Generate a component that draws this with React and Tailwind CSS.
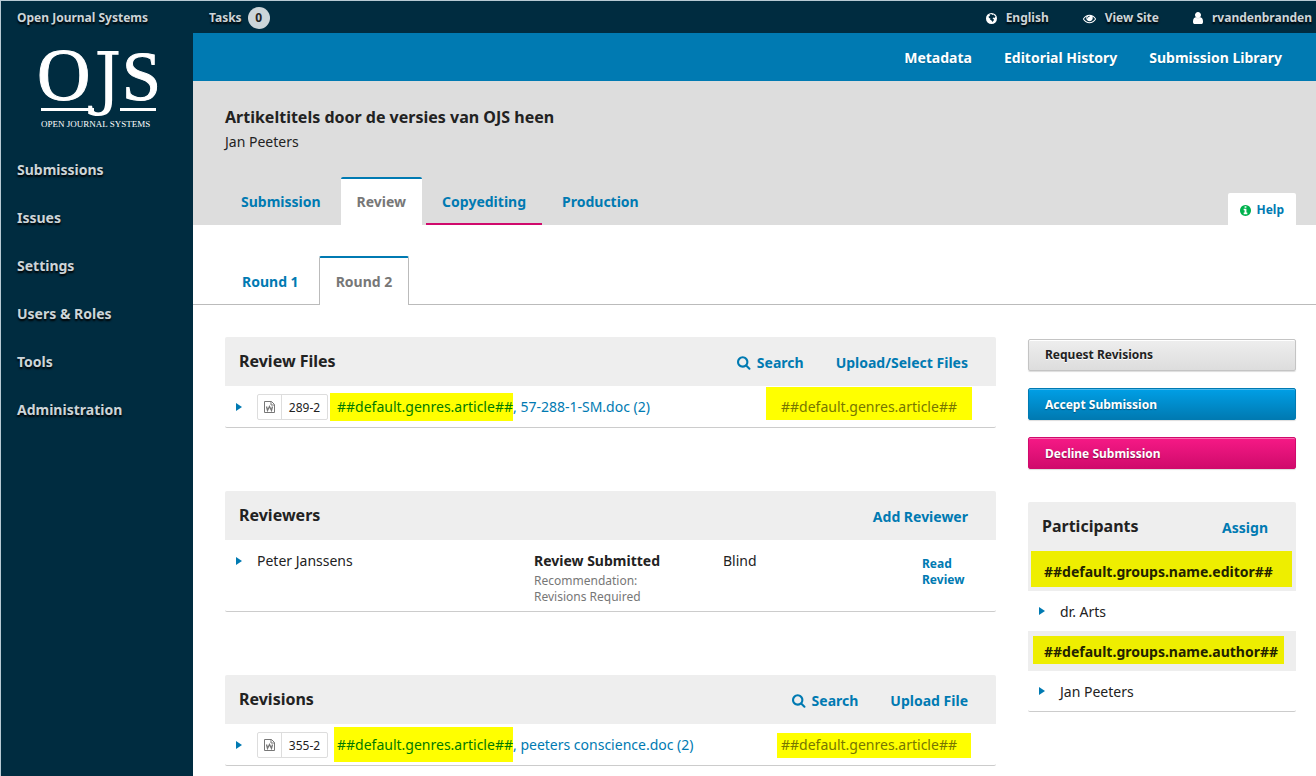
import React from "react";

const SIDE_MENU = ["Submissions", "Issues", "Settings", "Users & Roles", "Tools", "Administration"];

const WORKFLOW_TABS = [
  { label: "Submission", className: "border-transparent text-[#007ab2]" },
  { label: "Review", className: "rounded-t-xs border-t-[#007ab2] border-b-white bg-white text-[#777]" },
  { label: "Copyediting", className: "border-t-transparent border-b-[#d00a6c] text-[#007ab2]" },
  { label: "Production", className: "border-transparent text-[#007ab2]" },
];

const GlobeIcon = () => (
  <svg className="h-[11px] w-[11px]" viewBox="0 0 22 22" aria-hidden="true">
    <circle cx="11" cy="11" r="11" fill="#fff" />
    <path
      fill="#002c40"
      d="M7 3l4-1 1 2 3-1 4 4-2 3-2-1-2 2 2 1 1 2-3 4-2-3-3-2 1-2-3-1-1-3 3-1z"
    />
  </svg>
);

const EyeIcon = () => (
  <svg className="h-[13px] w-[13px]" viewBox="0 0 1792 1792" fill="#fff" aria-hidden="true">
    <path d="M1664 960q-152-236-381-353 61 104 61 225 0 185-131.5 316.5t-316.5 131.5-316.5-131.5-131.5-316.5q0-121 61-225-229 117-381 353 133 205 333.5 326.5t434.5 121.5 434.5-121.5 333.5-326.5zm-720-384q0-20-14-34t-34-14q-125 0-214.5 89.5t-89.5 214.5q0 20 14 34t34 14 34-14 14-34q0-86 61-147t147-61q20 0 34-14t14-34zm848 384q0 34-20 69-140 230-376.5 368.5t-499.5 138.5-499.5-139-376.5-368q-20-35-20-69t20-69q140-229 376.5-368t499.5-139 499.5 139 376.5 368q20 35 20 69z" />
  </svg>
);

const UserIcon = () => (
  <svg className="h-3 w-[10px]" viewBox="256 128 1280 1536" fill="#fff" aria-hidden="true">
    <path d="M1536 1399q0 109-62.5 187t-150.5 78h-854q-88 0-150.5-78t-62.5-187q0-85 8.5-160.5t31.5-152 58.5-131 94-89 134.5-34.5q131 128 313 128t313-128q76 0 134.5 34.5t94 89 58.5 131 31.5 152 8.5 160.5zm-256-887q0 159-112.5 271.5t-271.5 112.5-271.5-112.5-112.5-271.5 112.5-271.5 271.5-112.5 271.5 112.5 112.5 271.5z" />
    <path d="M560 800h672v200H560z" />
  </svg>
);

const SearchIcon = () => (
  <svg className="h-[14px] w-[14px]" viewBox="64 128 1728 1664" fill="currentColor" aria-hidden="true">
    <path d="M1216 832q0-185-131.5-316.5t-316.5-131.5-316.5 131.5-131.5 316.5 131.5 316.5 316.5 131.5 316.5-131.5 131.5-316.5zm512 832q0 52-38 90t-90 38q-54 0-90-38l-343-342q-179 124-399 124-143 0-273.5-55.5t-225-150-150-225-55.5-273.5 55.5-273.5 150-225 225-150 273.5-55.5 273.5 55.5 225 150 150 225 55.5 273.5q0 220-124 399l343 343q37 37 37 90z" />
  </svg>
);

const InfoIcon = () => (
  <svg className="h-[11px] w-[11px]" viewBox="128 128 1536 1536" fill="#00b24e" aria-hidden="true">
    <path d="M1152 1376v-160q0-14-9-23t-23-9h-96v-512q0-14-9-23t-23-9h-320q-14 0-23 9t-9 23v160q0 14 9 23t23 9h96v320h-96q-14 0-23 9t-9 23v160q0 14 9 23t23 9h448q14 0 23-9t9-23zm-128-896v-160q0-14-9-23t-23-9h-192q-14 0-23 9t-9 23v160q0 14 9 23t23 9h192q14 0 23-9t9-23zm640 416q0 209-103 385.5t-279.5 279.5-385.5 103-385.5-103-279.5-279.5-103-385.5 103-385.5 279.5-279.5 385.5-103 385.5 103 279.5 279.5 103 385.5z" />
  </svg>
);

const WordIcon = () => (
  <svg className="h-3 w-[11px]" viewBox="0 0 11 12" fill="none" stroke="#777" aria-hidden="true">
    <path d="M.5.5h7l3 3v8H.5z" />
    <path d="M7 .5v3.5h3.5" />
    <path d="M2.5 5.5l1 4 2-4 2 4 1-4" strokeWidth="1.3" />
  </svg>
);

const Caret = () => (
  <svg className="h-2 w-[6px]" viewBox="0 0 6 8" fill="#007ab2" aria-hidden="true">
    <path d="M0 0l6 4-6 4z" />
  </svg>
);

const Logo = () => (
  <a href="#" aria-label="Open Journal Systems" className="mx-9 mt-4 block h-[82px]">
    <svg className="h-[82px] w-[124px] overflow-visible" viewBox="0 0 124 82" fill="#fff">
      <g stroke="#fff" strokeWidth="1">
        <text x="0" y="51" fontSize="74" fontFamily="Liberation Serif, serif">O</text>
        <text x="57" y="53" fontSize="69" strokeWidth="0" fontFamily="DejaVu Serif, serif">J</text>
        <text x="85" y="51" fontSize="70" fontFamily="Liberation Serif, serif">S</text>
      </g>
      <rect x="4" y="59" width="53" height="3" />
      <rect x="83" y="59" width="36" height="3" />
      <text x="4" y="78" fontSize="9" fontFamily="Liberation Serif, serif">OPEN JOURNAL SYSTEMS</text>
    </svg>
  </a>
);

const Panel = ({ title, search, action, children }) => (
  <section className="rounded-xs border-b border-[#ccc]">
    <div className="flex h-[49px] items-center justify-between rounded-t-xs bg-[#eee] pr-7 pb-[2px] pl-[14px]">
      <h4 className="text-base font-bold">{title}</h4>
      <div className="flex gap-8 pt-1 text-sm font-bold text-[#007ab2]">
        {search && (
          <button type="button" className="flex items-center gap-[6px]">
            <SearchIcon />
            Search
          </button>
        )}
        <a href="#">{action}</a>
      </div>
    </div>
    {children}
  </section>
);

const FileTable = ({ id, file, nameMark, genreMark }) => (
  <table className="w-full text-sm">
    <tbody>
      <tr className="h-[41px]">
        <td className="p-0">
          <div className="flex items-center pl-[11px]">
            <button type="button" aria-label="Show details" className="mr-[15px]">
              <Caret />
            </button>
            <span className="flex h-[26px] items-center rounded-xs border border-[#ddd] text-xs">
              <span className="flex h-full w-6 items-center justify-center border-r border-[#ddd]">
                <WordIcon />
              </span>
              <span className="w-[45px] pt-[2px] text-center">{id}</span>
            </span>
            <a href="#" className="flex items-center text-[#007ab2]">
              <span className={nameMark}>##default.genres.article##</span>, {file}
            </a>
          </div>
        </td>
        <td className="w-[230px] p-0 align-top">
          <span className={genreMark}>##default.genres.article##</span>
        </td>
      </tr>
    </tbody>
  </table>
);

const ParticipantRow = ({ name }) => (
  <div className="flex h-10 items-center gap-[15px] pl-[11px] text-sm">
    <button type="button" aria-label={name}>
      <Caret />
    </button>
    <span className="pt-[2px]">{name}</span>
  </div>
);

const App = () => {
  return (
    <div className="flex min-h-screen flex-col border-t border-l border-[#b8cad4] bg-white font-['Noto_Sans',sans-serif] text-[#222]">
      <header className="flex h-8 items-center bg-[#002c40] pt-[2px] text-xs font-bold text-[#ccd5d9] [text-shadow:0_2px_2px_#000]">
        <a href="#" className="w-48 pl-4">Open Journal Systems</a>
        <a href="#" className="flex items-center gap-[6px] pl-4">
          Tasks
          <span className="flex h-[22px] w-[22px] items-center justify-center rounded-full bg-[#ccd5d9] text-[#222] [text-shadow:none]">
            0
          </span>
        </a>
        <nav className="ml-auto flex gap-[34px] pr-1">
          <a href="#" className="flex items-center gap-[9px]">
            <GlobeIcon />
            English
          </a>
          <a href="#" className="flex items-center gap-[9px]">
            <EyeIcon />
            View Site
          </a>
          <a href="#" className="flex items-center gap-[9px]">
            <UserIcon />
            rvandenbranden
          </a>
        </nav>
      </header>

      <div className="flex flex-1">
        <aside className="w-48 shrink-0 bg-[#002c40]">
          <Logo />
          <ul className="mt-[15px] text-sm font-bold text-[#ccd5d9] [text-shadow:0_2px_2px_#000]">
            {SIDE_MENU.map((item) => (
              <li key={item}>
                <a href="#" className="flex h-12 items-center pl-4">{item}</a>
              </li>
            ))}
          </ul>
        </aside>

        <main className="min-w-0 flex-1">
          <nav className="flex h-12 items-center justify-end gap-8 bg-[#007ab2] pt-[2px] pr-[34px] text-sm font-bold text-white [text-shadow:0_1px_1px_#006694]">
            <a href="#">Metadata</a>
            <a href="#">Editorial History</a>
            <a href="#">Submission Library</a>
          </nav>

          <div className="h-36 bg-[#ddd] pt-6 pr-5 pl-8">
            <h1 className="text-base font-bold">Artikeltitels door de versies van OJS heen</h1>
            <p className="pt-[3px] text-sm">Jan Peeters</p>
            <div className="mt-[25px] flex items-end">
              <div className="flex gap-1 text-sm font-bold">
                {WORKFLOW_TABS.map((tab) => (
                  <a key={tab.label} href="#" className={`flex h-12 items-center border-y-2 px-4 pt-[2px] ${tab.className}`}>
                    {tab.label}
                  </a>
                ))}
              </div>
              <button
                type="button"
                className="ml-auto flex h-8 items-center gap-[5px] rounded-t-xs bg-white px-3 pt-[2px] text-xs font-bold text-[#007ab2]"
              >
                <InfoIcon />
                Help
              </button>
            </div>
          </div>

          <div className="mt-[31px] flex h-[49px] gap-[3px] pl-8 text-sm font-bold shadow-[inset_0_-1px_0_#bbb]">
            <a href="#" className="flex items-center px-[17px] pt-[2px] text-[#007ab2]">Round 1</a>
            <a
              href="#"
              className="flex items-center rounded-t-xs border-x border-t-2 border-x-[#bbb] border-t-[#007ab2] bg-white px-4 text-[#777]"
            >
              Round 2
            </a>
          </div>

          <div className="flex items-start gap-8 pt-8 pr-5 pb-2 pl-8">
            <div className="flex min-w-0 flex-1 flex-col gap-[63px]">
              <Panel title="Review Files" search action="Upload/Select Files">
                <FileTable
                  id="289-2"
                  file="57-288-1-SM.doc (2)"
                  nameMark="ml-[2px] flex h-7 items-center bg-[#ff0] pl-[7px] text-[#007a00]"
                  genreMark="mt-px mr-6 flex h-[33px] items-center bg-[#ff0] pt-[6px] pl-[15px] text-[#777700]"
                />
              </Panel>

              <Panel title="Reviewers" action="Add Reviewer">
                <table className="w-full text-sm">
                  <tbody>
                    <tr className="h-[71px] align-top">
                      <td className="px-0 pt-[11px]">
                        <div className="flex items-center gap-[15px] pl-[11px]">
                          <button type="button" aria-label="Show details">
                            <Caret />
                          </button>
                          Peter Janssens
                        </div>
                      </td>
                      <td className="w-[189px] px-0 pt-[11px]">
                        <strong>Review Submitted</strong>
                        <div className="w-32 pt-[2px] text-xs text-[#777]">Recommendation: Revisions Required</div>
                      </td>
                      <td className="w-[199px] px-0 pt-[11px]">Blind</td>
                      <td className="w-[74px] px-0 pt-4 pr-7 text-xs font-bold text-[#007ab2]">
                        <a href="#">Read Review</a>
                      </td>
                    </tr>
                  </tbody>
                </table>
              </Panel>

              <Panel title="Revisions" search action="Upload File">
                <FileTable
                  id="355-2"
                  file="peeters conscience.doc (2)"
                  nameMark="ml-[6px] flex h-[35px] items-center bg-[#ff0] pl-[3px] text-[#007a00]"
                  genreMark="mt-[9px] mr-[25px] ml-[11px] flex h-[25px] items-center bg-[#ff0] pb-[2px] pl-1 text-[#777700]"
                />
              </Panel>
            </div>

            <div className="w-[268px] shrink-0 pt-[2px]">
              <div className="flex flex-col gap-[17px] text-xs font-bold">
                <button
                  type="button"
                  className="h-8 rounded-xs border border-[#c4c4c4] bg-linear-to-b from-[#eee] to-[#ddd] px-4 text-left shadow-[inset_0_1px_0_#fff,0_1px_1px_#ddd] [text-shadow:0_1px_0_#fff]"
                >
                  Request Revisions
                </button>
                <button
                  type="button"
                  className="h-8 rounded-xs border border-[#007ab2] bg-linear-to-b from-[#009fe6] to-[#007ab2] px-4 pt-[2px] text-left text-white shadow-[inset_0_1px_0_#4db9ec,0_1px_1px_#ddd] [text-shadow:0_1px_1px_#00557c]"
                >
                  Accept Submission
                </button>
                <button
                  type="button"
                  className="h-8 rounded-xs border border-[#d00a6c] bg-linear-to-b from-[#f61986] to-[#d00a6c] px-4 pt-[2px] text-left text-white shadow-[inset_0_1px_0_#f86aaf,0_1px_1px_#ddd] [text-shadow:0_1px_1px_#8b0748]"
                >
                  Decline Submission
                </button>
              </div>

              <section className="mt-[33px] rounded-xs border-b border-[#ccc]">
                <div className="flex h-[49px] items-center justify-between rounded-t-xs bg-[#eee] pr-7 pb-[2px] pl-[14px]">
                  <h4 className="text-base font-bold">Participants</h4>
                  <a href="#" className="pt-1 text-sm font-bold text-[#007ab2]">Assign</a>
                </div>
                <div className="h-10 bg-[#eee] pr-1 pl-[3px]">
                  <h5 className="flex h-9 items-center bg-[#ee0] pt-[5px] pl-[13px] text-sm font-bold text-[#222200]">
                    ##default.groups.name.editor##
                  </h5>
                </div>
                <ParticipantRow name="dr. Arts" />
                <div className="h-10 bg-[#eee] pt-[5px] pr-3 pl-[5px]">
                  <h5 className="flex h-7 items-center bg-[#ee0] pt-[3px] pl-[11px] text-sm font-bold text-[#222200]">
                    ##default.groups.name.author##
                  </h5>
                </div>
                <ParticipantRow name="Jan Peeters" />
              </section>
            </div>
          </div>
        </main>
      </div>
    </div>
  );
};

export default App;
